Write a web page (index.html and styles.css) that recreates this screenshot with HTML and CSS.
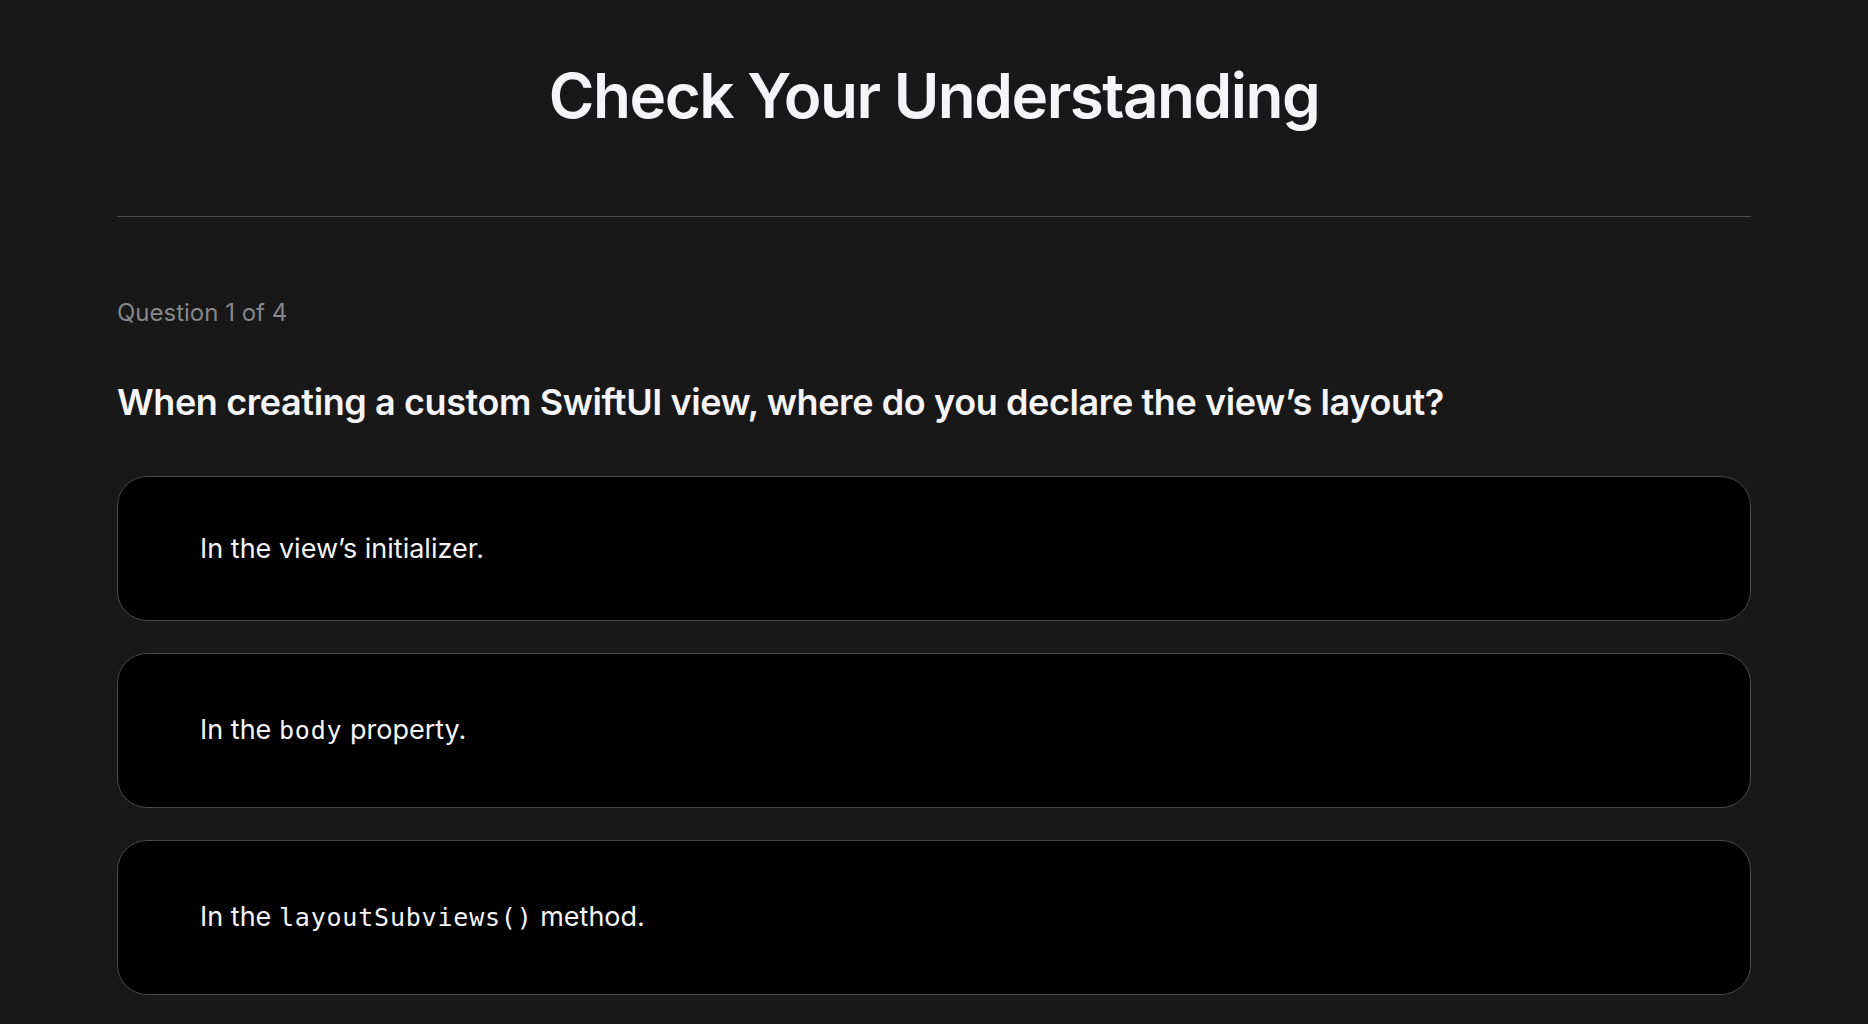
FILE: index.html
```html
<!DOCTYPE html>
<html lang="en">
<head>
<meta charset="utf-8">
<title>Check Your Understanding</title>
<link rel="stylesheet" href="styles.css">
</head>
<body>
<main class="quiz">
  <h1 class="quiz-title">Check Your Understanding</h1>
  <hr class="divider">
  <p class="progress">Question 1 of 4</p>
  <h2 class="question">When creating a custom SwiftUI view, where do you declare the view’s layout?</h2>
  <ul class="choices">
    <li class="choice">In the view’s initializer.</li>
    <li class="choice">In the <code class="code">body</code> property.</li>
    <li class="choice">In the <code class="code">layoutSubviews()</code> method.</li>
  </ul>
</main>
</body>
</html>
```

FILE: styles.css
```css
html, body {
  margin: 0;
  padding: 0;
  background: #181818;
}
body {
  font-family: Inter, "Noto Sans", "Liberation Sans", sans-serif;
  color: #f5f5f7;
  height: 1024px;
  overflow: hidden;
}
.quiz {
  width: 1634px;
  margin: 0 auto;
  padding-top: 61px;
}
.quiz-title {
  margin: 0;
  text-align: center;
  font-size: 62px;
  line-height: 70px;
  font-weight: 600;
  letter-spacing: -1.5px;
  color: #f5f5f7;
}
.divider {
  margin: 85px 0 0;
  border: 0;
  border-top: 1px solid #4a4a4c;
  height: 0;
}
.progress {
  margin: 80px 0 0;
  font-size: 24px;
  line-height: 32px;
  color: #86868b;
}
.question {
  margin: 51px 0 0;
  font-size: 36px;
  line-height: 44px;
  font-weight: 600;
  letter-spacing: -0.4px;
  color: #f5f5f7;
}
.choices {
  list-style: none;
  margin: 52px 0 0;
  padding: 0;
  display: flex;
  flex-direction: column;
  gap: 32px;
}
.choice {
  background: #000;
  border: 1px solid #4a4a4c;
  border-radius: 30px;
  padding: 55px 82px;
  font-size: 27px;
  line-height: 33px;
  color: #f5f5f7;
}
.code {
  display: inline-block;
  font-family: "DejaVu Sans Mono", "Liberation Mono", monospace;
  font-size: 25px;
  line-height: 43px;
  letter-spacing: 0.8px;
  vertical-align: baseline;
}
```
